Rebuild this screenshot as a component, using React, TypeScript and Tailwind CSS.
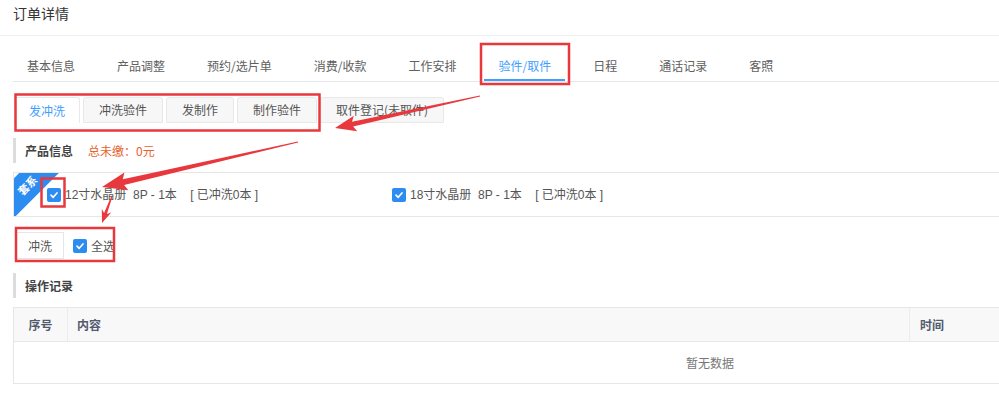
const tabs = ["基本信息", "产品调整", "预约/选片单", "消费/收款", "工作安排", "验件/取件", "日程", "通话记录", "客照"];
const subTabs = ["发冲洗", "冲洗验件", "发制作", "制作验件", "取件登记(未取件)"];

const Check = () => (
  <span className="w-[14px] h-[14px] rounded-[2px] bg-[#2d8cf0] flex items-center justify-center shrink-0">
    <svg width="10" height="10" viewBox="0 0 10 10">
      <polyline points="2,5.2 4.2,7.3 8,3" fill="none" stroke="white" strokeWidth="1.7" strokeLinecap="round" strokeLinejoin="round" />
    </svg>
  </span>
);

const SectionTitle = ({ children }: { children: React.ReactNode }) => (
  <div className="ml-[13px] h-[25px] border-l-[3px] border-[#dcdcdc] pl-[9px] flex items-center text-[12px] font-bold text-[#444]">
    {children}
  </div>
);

function arrow(tx: number, ty: number, hx: number, hy: number, headLen: number, headHalf: number, shaftHalf: number) {
  const dx = hx - tx, dy = hy - ty;
  const L = Math.hypot(dx, dy);
  const ux = dx / L, uy = dy / L;
  const nx = -uy, ny = ux;
  const bx = hx - ux * headLen, by = hy - uy * headLen;
  const wx = bx - ux * 3, wy = by - uy * 3;
  const p = (x: number, y: number) => `${x.toFixed(1)},${y.toFixed(1)}`;
  return [
    p(tx + nx * 0.5, ty + ny * 0.5),
    p(bx + nx * shaftHalf, by + ny * shaftHalf),
    p(wx + nx * headHalf, wy + ny * headHalf),
    p(hx, hy),
    p(wx - nx * headHalf, wy - ny * headHalf),
    p(bx - nx * shaftHalf, by - ny * shaftHalf),
    p(tx - nx * 0.5, ty - ny * 0.5),
  ].join(" ");
}

export default function App() {
  return (
    <div className="relative w-[999px] h-[403px] overflow-hidden bg-white font-['Noto_Sans_CJK_SC',sans-serif]">
      {/* header */}
      <div className="h-[36px] border-b border-[#f0f0f0] pl-[13px] pt-[3px] text-[14px] leading-[20px] text-[#333]">订单详情</div>

      {/* main tabs */}
      <div className="ml-[13px] mt-[15px] w-[1400px] border-b border-[#e4e7ed] flex gap-[14px] text-[12px]">
        {tabs.map((t) => (
          <div
            key={t}
            className={
              t === "验件/取件"
                ? "h-[30px] px-[14px] flex items-center text-[#409eff] border-b-2 border-[#409eff] -mb-px pt-[2px]"
                : "h-[30px] px-[14px] flex items-center text-[#606060]"
            }
          >
            {t}
          </div>
        ))}
      </div>

      {/* sub tabs */}
      <div className="ml-[14px] mt-[15px] flex gap-[3px] text-[12px]">
        {subTabs.map((t, i) => (
          <div
            key={t}
            className={
              i === 0
                ? "h-[26px] px-[14px] flex items-center border border-b-0 border-[#e8e8e8] rounded-t-[3px] bg-white text-[#409eff]"
                : "h-[26px] px-[15px] flex items-center border border-[#e8e8e8] rounded-t-[3px] bg-[#f7f7f7] text-[#555]"
            }
          >
            {t}
          </div>
        ))}
      </div>

      <div className="mt-[15px]">
        <SectionTitle>
          产品信息<span className="ml-[15px] font-normal text-[#e8622e]">总未缴：0元</span>
        </SectionTitle>
      </div>

      {/* product row */}
      <div className="relative ml-[13px] mt-[9px] w-[1400px] h-[45px] border border-[#e6e6e6] overflow-hidden flex items-center pl-[33px] text-[12px] text-[#555]">
        <div className="absolute left-[-27px] top-[-2px] w-[80px] h-[28px] -rotate-45 bg-[#2d8cf0] flex items-center justify-center text-white text-[11px] font-bold">
          套系
        </div>
        <div className="flex items-center gap-[4px] w-[345px]">
          <Check />
          <span className="whitespace-pre font-['Liberation_Sans','Noto_Sans_CJK_SC',sans-serif]">12寸水晶册  8P - 1本    [ 已冲洗0本 ]</span>
        </div>
        <div className="flex items-center gap-[4px]">
          <Check />
          <span className="whitespace-pre font-['Liberation_Sans','Noto_Sans_CJK_SC',sans-serif]">18寸水晶册  8P - 1本    [ 已冲洗0本 ]</span>
        </div>
      </div>

      {/* actions */}
      <div className="ml-[16px] mt-[15px] flex items-center text-[12px] text-[#555]">
        <div className="w-[48px] h-[27px] border border-[#e6e6e6] flex items-center justify-center">冲洗</div>
        <div className="ml-[9px] flex items-center gap-[4px]">
          <Check />
          全选
        </div>
      </div>

      <div className="mt-[14px]">
        <SectionTitle>操作记录</SectionTitle>
      </div>

      {/* table */}
      <div className="ml-[13px] mt-[9px] w-[1394px] border border-[#e6e6e6] text-[12px]">
        <div className="h-[34px] bg-[#f8f8f9] border-b border-[#e8e8e8] flex font-bold text-[#515a6e]">
          <div className="w-[54px] border-r border-[#ececec] flex items-center justify-center">序号</div>
          <div className="w-[842px] border-r border-[#ececec] flex items-center pl-[9px]">内容</div>
          <div className="flex-1 flex items-center pl-[10px]">时间</div>
        </div>
        <div className="h-[41px] flex items-center justify-center text-[#777]">暂无数据</div>
      </div>

      {/* annotations */}
      <svg className="absolute left-0 top-0 pointer-events-none" width="999" height="403">
        <g fill="none" stroke="#e8383d" strokeWidth="2.5">
          <rect x="481" y="44" width="88" height="40" />
          <rect x="15.5" y="94.5" width="304" height="36" />
          <rect x="41.5" y="178.5" width="23" height="28" />
          <rect x="16" y="228" width="98" height="33" />
        </g>
        <g fill="#e8383d">
          <polygon points={arrow(480, 96, 335, 128, 18, 8, 2.5)} />
          <polygon points={arrow(298, 142, 102, 187, 22, 9, 3)} />
          <polygon points={arrow(112, 196, 102, 223, 10, 5, 1.5)} />
        </g>
      </svg>
    </div>
  );
}
